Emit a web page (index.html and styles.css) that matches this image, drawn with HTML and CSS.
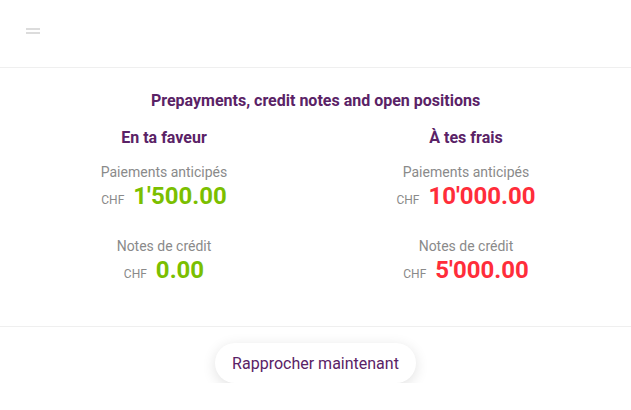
FILE: index.html
```html
<!DOCTYPE html>
<html lang="fr">
<head>
  <meta charset="UTF-8">
  <meta name="viewport" content="width=device-width, initial-scale=1.0">
  <title>Balance</title>
  <link rel="stylesheet" href="styles.css">
</head>
<body>

<header class="topbar">
  <button class="menu-btn" aria-label="Menu">
    <span></span><span></span>
  </button>
</header>

<main class="balance">
  <h1 class="balance-title">Prepayments, credit notes and open positions</h1>

  <div class="balance-cols">
    <section class="col">
      <h2>En ta faveur</h2>
      <div class="entry">
        <p class="label">Paiements anticipés</p>
        <p class="amount"><span class="cur">CHF</span><span class="val plus">1'500.00</span></p>
      </div>
      <div class="entry">
        <p class="label">Notes de crédit</p>
        <p class="amount"><span class="cur">CHF</span><span class="val plus">0.00</span></p>
      </div>
    </section>

    <section class="col">
      <h2>À tes frais</h2>
      <div class="entry">
        <p class="label">Paiements anticipés</p>
        <p class="amount"><span class="cur">CHF</span><span class="val minus">10'000.00</span></p>
      </div>
      <div class="entry">
        <p class="label">Notes de crédit</p>
        <p class="amount"><span class="cur">CHF</span><span class="val minus">5'000.00</span></p>
      </div>
    </section>
  </div>
</main>

<footer class="actions">
  <button class="btn-pill">Rapprocher maintenant</button>
</footer>

</body>
</html>
```

FILE: styles.css
```css
:root {
  --purple: #5a2266;
  --green: #7bbf00;
  --red: #ff2d3a;
  --muted: #8a8a8a;
  --line: #efefef;
}
* { box-sizing: border-box; }
body {
  font-family: Roboto, 'Noto Sans', sans-serif;
  margin: 0;
  background: #fff;
  color: #333;
}
.topbar {
  height: 68px;
  border-bottom: 1px solid var(--line);
  padding: 28px 0 0 26px;
}
.menu-btn {
  display: flex;
  flex-direction: column;
  gap: 2px;
  padding: 0;
  border: none;
  background: none;
  cursor: pointer;
}
.menu-btn span {
  display: block;
  width: 14px;
  height: 2px;
  background: #dcdcdc;
}
.balance {
  padding: 23px 0 42px;
  border-bottom: 1px solid var(--line);
}
.balance-title {
  margin: 0;
  text-align: center;
  font-size: 16px;
  line-height: 19px;
  font-weight: 700;
  color: var(--purple);
}
.balance-cols {
  display: grid;
  grid-template-columns: 302px 302px;
  margin: 18px 0 0 13px;
}
.col { text-align: center; }
.col h2 {
  margin: 0 0 17px;
  font-size: 16px;
  line-height: 19px;
  font-weight: 700;
  color: var(--purple);
}
.entry + .entry { margin-top: 28px; }
.label {
  margin: 0;
  font-size: 14px;
  line-height: 16px;
  color: var(--muted);
}
.amount {
  margin: 2px 0 0;
  height: 28px;
  display: flex;
  justify-content: center;
  align-items: baseline;
  gap: 9px;
}
.cur {
  font-size: 12px;
  color: var(--muted);
}
.val {
  font-size: 24px;
  line-height: 28px;
  font-weight: 700;
}
.val.plus { color: var(--green); }
.val.minus { color: var(--red); }
.actions {
  display: flex;
  justify-content: center;
  padding-top: 16px;
}
.btn-pill {
  font-family: inherit;
  font-size: 16px;
  color: var(--purple);
  background: #fff;
  border: none;
  border-radius: 20px;
  height: 40px;
  padding: 0 17px;
  box-shadow: 0 3px 14px rgba(0,0,0,0.12);
  cursor: pointer;
}
```
